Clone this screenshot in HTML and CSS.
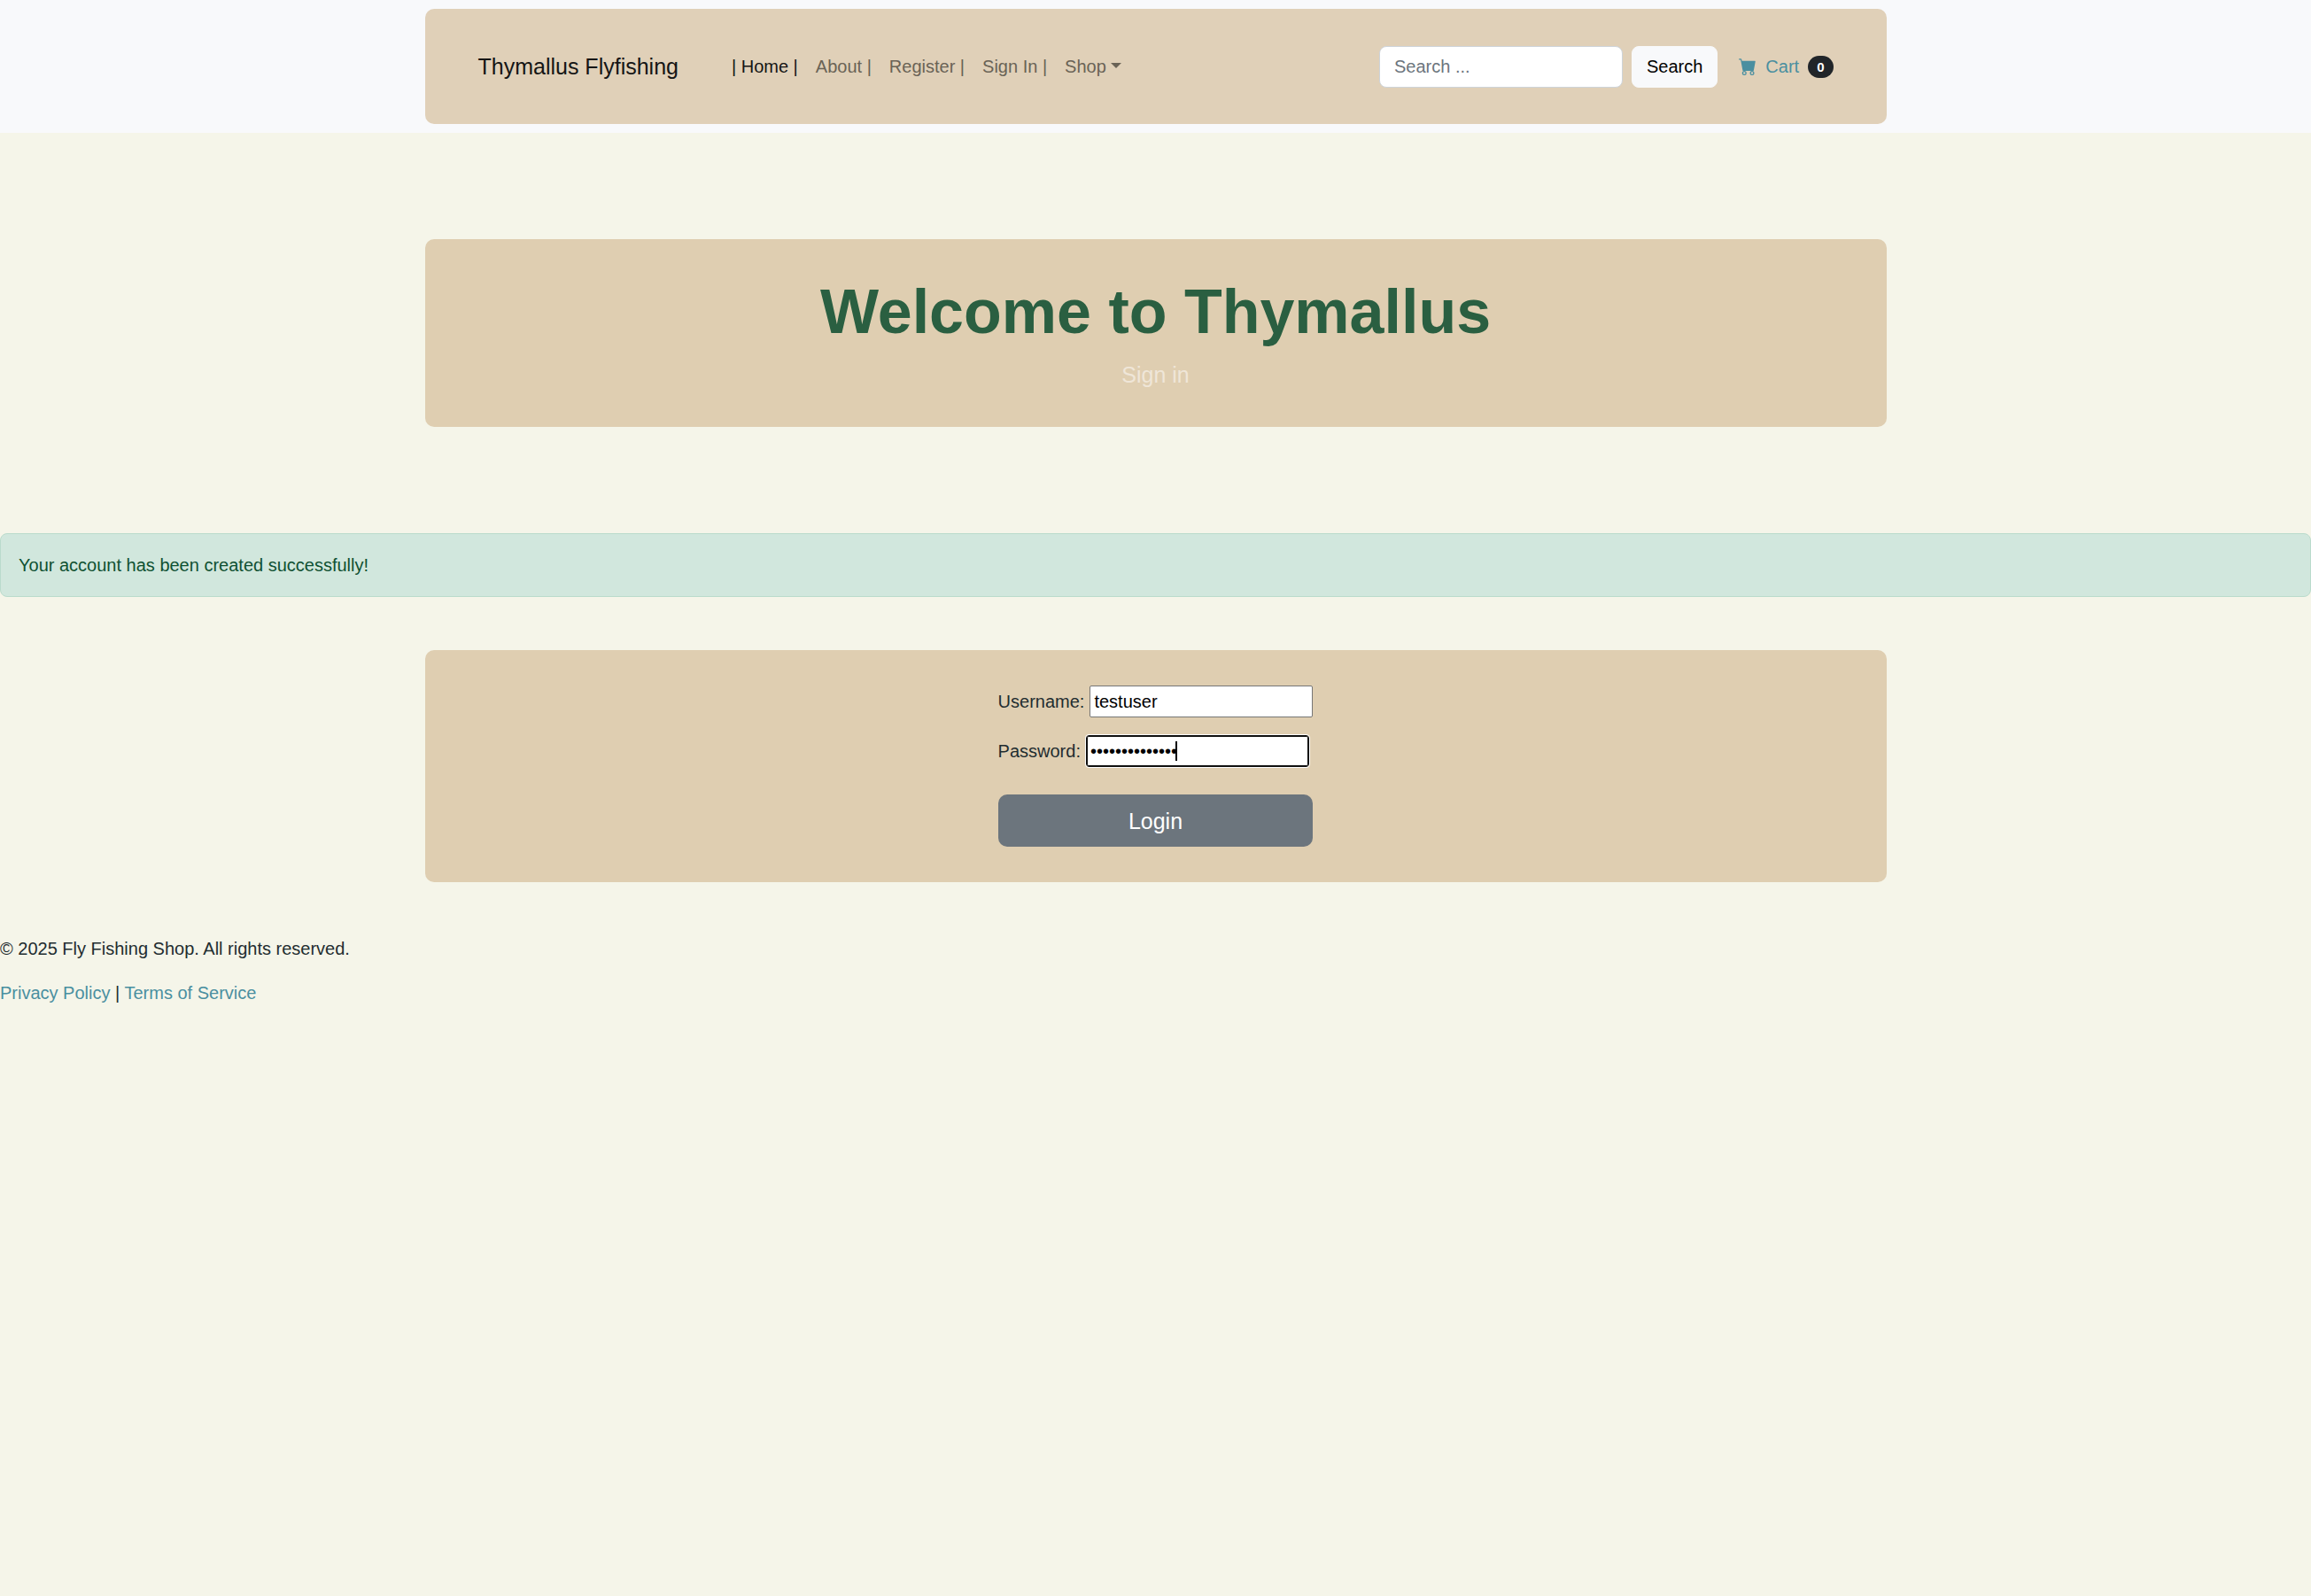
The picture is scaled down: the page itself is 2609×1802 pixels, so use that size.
FILE: index.html
```html
<!DOCTYPE html>
<html lang="en">
<head>
  <meta charset="utf-8">
  <meta name="viewport" content="width=device-width, initial-scale=1">
  <title>Thymallus Flyfishing - Sign in</title>
  <link rel="stylesheet" href="styles.css">
</head>
<body>
  <nav class="navbar">
    <div class="container panel navbar-inner">
      <a class="brand" href="#">Thymallus Flyfishing</a>
      <ul class="nav-list">
        <li><a class="nav-link active" href="#">| Home |</a></li>
        <li><a class="nav-link" href="#">About |</a></li>
        <li><a class="nav-link" href="#">Register |</a></li>
        <li><a class="nav-link" href="#">Sign In |</a></li>
        <li><a class="nav-link dropdown" href="#">Shop</a></li>
      </ul>
      <form class="search">
        <input class="search-input" type="search" placeholder="Search ..." aria-label="Search">
        <button class="search-button" type="submit">Search</button>
      </form>
      <a class="cart" href="#">
        <svg class="cart-icon" viewBox="0 0 16 16" fill="currentColor" aria-hidden="true">
          <path d="M0 1.5A.5.5 0 0 1 .5 1H2a.5.5 0 0 1 .485.379L2.89 3H14.5a.5.5 0 0 1 .491.592l-1.5 8A.5.5 0 0 1 13 12H4a.5.5 0 0 1-.491-.408L2.01 3.607 1.61 2H.5a.5.5 0 0 1-.5-.5M5 12a2 2 0 1 0 0 4 2 2 0 0 0 0-4m7 0a2 2 0 1 0 0 4 2 2 0 0 0 0-4m-7 1a1 1 0 1 1 0 2 1 1 0 0 1 0-2m7 0a1 1 0 1 1 0 2 1 1 0 0 1 0-2"/>
        </svg>
        <span>Cart</span>
        <span class="badge">0</span>
      </a>
    </div>
  </nav>

  <header class="container panel hero">
    <h1 class="hero-title">Welcome to Thymallus</h1>
    <p class="hero-lead">Sign in</p>
  </header>

  <div class="alert" role="alert">Your account has been created successfully!</div>

  <main class="container panel login">
    <form class="login-form">
      <p class="field">
        <label for="username">Username:</label>
        <input class="field-input" type="text" id="username" value="testuser">
      </p>
      <p class="field">
        <label for="password">Password:</label>
        <span class="caret-field">
          <input class="field-input" type="password" id="password" value="flyfishing2025" autofocus>
        </span>
      </p>
      <button class="login-button" type="submit">Login</button>
    </form>
  </main>

  <footer class="footer">
    <p>© 2025 Fly Fishing Shop. All rights reserved.</p>
    <p><a href="#">Privacy Policy</a> | <a href="#">Terms of Service</a></p>
  </footer>
</body>
</html>
```
FILE: styles.css
```css
*,
*::before,
*::after {
  box-sizing: border-box;
}

body {
  margin: 0;
  background: #f5f5e9;
  color: #1f2d30;
  font-family: "Liberation Sans", Arial, sans-serif;
  font-size: 20px;
  line-height: 30px;
}

a {
  color: #4a8fa0;
  text-decoration: none;
}

p {
  margin: 0;
}

input,
button {
  font: inherit;
}

.container {
  width: 100%;
  max-width: 1650px;
  margin: 0 auto;
}

.panel {
  border-radius: 10px;
  background: #dfceb1;
}

.navbar {
  padding: 10px 0;
  background: #f8f9fb;
}

.navbar-inner {
  display: flex;
  align-items: center;
  min-height: 130px;
  padding: 40px 60px;
  background: #e0d0b8;
}

.brand {
  margin-right: 50px;
  color: #151515;
  font-size: 25px;
}

.nav-list {
  display: flex;
  flex: 1;
  margin: 0;
  padding: 0;
  list-style: none;
}

.nav-link {
  display: block;
  padding: 10px;
  color: #6a6356;
}

.nav-link.active {
  color: #151515;
}

.dropdown::after {
  content: "";
  display: inline-block;
  margin-left: 5px;
  vertical-align: 5px;
  border-top: 6px solid;
  border-right: 6px solid transparent;
  border-left: 6px solid transparent;
}

.search {
  display: flex;
  gap: 10px;
}

.search-input {
  width: 275px;
  height: 47px;
  padding: 7px 16px;
  border: 1px solid #ced4da;
  border-radius: 8px;
  background: #fff;
  color: #212529;
}

.search-input::placeholder {
  color: #6c757d;
  opacity: 1;
}

.search-button {
  height: 47px;
  padding: 7px 16px;
  border: 1px solid #f8f9fa;
  border-radius: 8px;
  background: #f8f9fb;
  color: #000;
}

.cart {
  display: flex;
  align-items: center;
  gap: 10px;
  margin-left: 24px;
}

.cart-icon {
  width: 20px;
  height: 20px;
}

.badge {
  padding: 5px 10px;
  border-radius: 13px;
  background: #212529;
  color: #fff;
  font-size: 15px;
  font-weight: bold;
  line-height: 15px;
}

.hero {
  margin: 120px auto;
  padding: 40px;
  text-align: center;
}

.hero-title {
  margin: 0 0 10px;
  color: #2a5f41;
  font-size: 70px;
  line-height: 84px;
}

.hero-lead {
  color: rgba(255, 255, 255, 0.5);
  font-size: 25px;
  line-height: 38px;
}

.alert {
  padding: 20px;
  border: 1px solid #badbcc;
  border-radius: 8px;
  background: #d1e7dd;
  color: #0f5132;
}

.login {
  display: flex;
  justify-content: center;
  margin: 60px auto;
  padding: 40px;
}

.login-form {
  display: flex;
  flex-direction: column;
}

.field {
  display: flex;
  align-items: center;
  gap: 6px;
  margin-bottom: 20px;
}

.field-input {
  width: 252px;
  height: 36px;
  padding: 1px 4px;
  border: 1px solid #767676;
  border-radius: 2px;
  background: #fff;
  color: #000;
}

.field-input:focus {
  border-color: #101010;
  border-radius: 3px;
  outline: 1px solid #fff;
  box-shadow: inset 0 0 0 1px #101010;
}

/* Steady text cursor after the password dots */
.caret-field {
  display: flex;
  position: relative;
}

.caret-field .field-input {
  caret-color: transparent;
}

.caret-field:focus-within::after {
  content: "";
  position: absolute;
  top: 7px;
  left: 101px;
  width: 2px;
  height: 22px;
  background: #000;
}

.login-button {
  height: 59px;
  margin-top: 11px;
  padding: 10px 20px;
  border: 0;
  border-radius: 10px;
  background: #6c757d;
  color: #fff;
  font-size: 25px;
}

.footer p {
  margin-bottom: 20px;
}
```
